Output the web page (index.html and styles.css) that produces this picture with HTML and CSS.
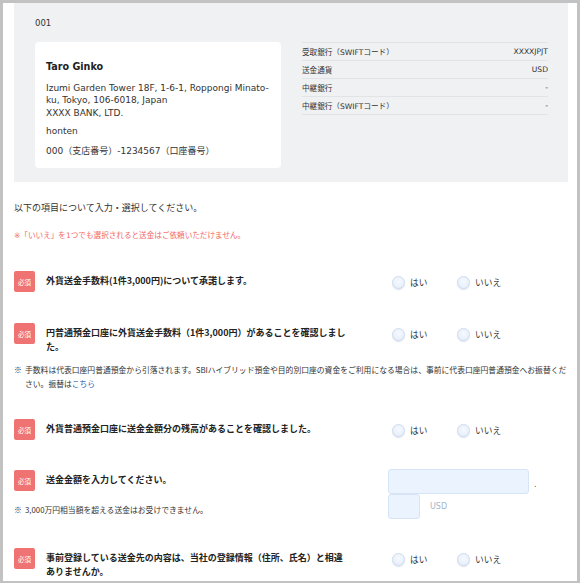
FILE: index.html
```html
<!DOCTYPE html>
<html lang="ja">
<head>
<meta charset="utf-8">
<title>送金内容確認</title>
<link rel="stylesheet" href="styles.css">
</head>
<body>
<div class="frame">
  <section class="panel">
    <div class="num">001</div>
    <div class="panel-body">
      <div class="card">
        <div class="card-name">Taro Ginko</div>
        <div class="card-addr">Izumi Garden Tower 18F, 1-6-1, Roppongi Minato-ku, Tokyo, 106-6018, Japan<br>XXXX BANK, LTD.</div>
        <div class="card-branch">honten</div>
        <div class="card-acct">000（支店番号）-1234567（口座番号）</div>
      </div>
      <div class="info">
        <div class="info-row"><span>受取銀行（SWIFTコード）</span><span>XXXXJPJT</span></div>
        <div class="info-row"><span>送金通貨</span><span>USD</span></div>
        <div class="info-row"><span>中継銀行</span><span>-</span></div>
        <div class="info-row"><span>中継銀行（SWIFTコード）</span><span>-</span></div>
      </div>
    </div>
  </section>

  <p class="intro">以下の項目について入力・選択してください。</p>
  <p class="warn">※「いいえ」を1つでも選択されると送金はご依頼いただけません。</p>

  <div class="item">
    <div class="head"><span class="badge">必須</span><span class="label">外貨送金手数料(1件3,000円)について承諾します。</span></div>
    <div class="radios">
      <label class="opt"><span class="dot"></span>はい</label>
      <label class="opt"><span class="dot"></span>いいえ</label>
    </div>
  </div>

  <div class="item item-second">
    <div class="head"><span class="badge">必須</span><span class="label">円普通預金口座に外貨送金手数料（1件3,000円）があることを確認しました。</span></div>
    <div class="radios">
      <label class="opt"><span class="dot"></span>はい</label>
      <label class="opt"><span class="dot"></span>いいえ</label>
    </div>
    <p class="note"><span class="mark">※</span><span class="note-text">手数料は代表口座円普通預金から引落されます。SBIハイブリッド預金や目的別口座の資金をご利用になる場合は、事前に代表口座円普通預金へお振替ください。振替は<a href="#" class="link">こちら</a></span></p>
  </div>

  <div class="item item-after-note">
    <div class="head"><span class="badge">必須</span><span class="label">外貨普通預金口座に送金金額分の残高があることを確認しました。</span></div>
    <div class="radios">
      <label class="opt"><span class="dot"></span>はい</label>
      <label class="opt"><span class="dot"></span>いいえ</label>
    </div>
  </div>

  <div class="item item-amount">
    <div class="head"><span class="badge">必須</span><span class="label">送金金額を入力してください。</span></div>
    <div class="amount">
      <div class="amount-row"><span class="box box-int"></span><span class="dec">.</span></div>
      <div class="amount-row"><span class="box box-dec"></span><span class="cur">USD</span></div>
    </div>
    <p class="note note-short"><span class="mark">※</span><span class="note-text">3,000万円相当額を超える送金はお受けできません。</span></p>
  </div>

  <div class="item">
    <div class="head"><span class="badge">必須</span><span class="label">事前登録している送金先の内容は、当社の登録情報（住所、氏名）と相違ありませんか。</span></div>
    <div class="radios">
      <label class="opt"><span class="dot"></span>はい</label>
      <label class="opt"><span class="dot"></span>いいえ</label>
    </div>
  </div>
</div>
</body>
</html>
```

FILE: styles.css
```css
* { box-sizing: border-box; }
html, body { margin: 0; padding: 0; background: #fff; }
body {
  font-family: "DejaVu Sans", "Noto Sans CJK JP", sans-serif;
  color: #333;
}
p { margin: 0; }

.frame {
  width: 580px;
  height: 583px;
  border: 3px solid #c2c2c2;
  border-bottom-width: 2px;
  padding: 0 9px 0 11px;
  overflow: hidden;
  background: #fff;
}

/* top panel */
.panel {
  background: #f0f1f3;
  padding: 14px 20px 14px 21px;
}
.num {
  font-size: 8.5px;
  line-height: 12px;
  color: #333;
}
.panel-body {
  margin-top: 13px;
  display: grid;
  grid-template-columns: 246px 246px;
  column-gap: 21px;
  align-items: start;
}
.card {
  background: #fff;
  border-radius: 4px;
  padding: 19px 11px 11px 11px;
  font-size: 9px;
  line-height: 12.3px;
  color: #333;
}
.card-name {
  font-size: 9.6px;
  line-height: 12px;
  font-weight: bold;
  color: #222;
}
.card-addr { margin-top: 9px; }
.card-branch { margin-top: 6px; }
.card-acct { margin-top: 8px; }

.info {
  border-top: 1px solid #e1e3e6;
}
.info-row {
  display: flex;
  justify-content: space-between;
  align-items: center;
  height: 18px;
  border-bottom: 1px solid #e1e3e6;
  font-size: 7.6px;
  color: #333;
}

/* texts */
.intro {
  margin-top: 19px;
  font-size: 9px;
  line-height: 14px;
  color: #333;
}
.warn {
  margin-top: 15px;
  font-size: 7.6px;
  line-height: 12px;
  color: #f26868;
}

/* items */
.item {
  margin-top: 29px;
  display: grid;
  grid-template-columns: 374px 1fr;
  align-items: start;
}
.item-second { margin-top: 30px; }
.item-after-note { margin-top: 28px; }
.head {
  display: flex;
  align-items: flex-start;
  gap: 11px;
}
.badge {
  flex: none;
  width: 21px;
  height: 21px;
  background: #f07373;
  border-radius: 2px;
  color: #fff;
  font-size: 6.5px;
  display: flex;
  align-items: center;
  justify-content: center;
  font-family: "Noto Sans CJK JP", sans-serif;
}
.label {
  width: 300px;
  padding-top: 3px;
  font-size: 9px;
  line-height: 14px;
  font-weight: bold;
  color: #222;
  font-family: "Noto Sans CJK JP", sans-serif;
}
.radios {
  display: flex;
  align-items: center;
  height: 21px;
  margin-top: 1px;
  padding-left: 4px;
}
.opt {
  display: flex;
  align-items: center;
  gap: 5px;
  width: 65px;
  font-size: 8.7px;
  color: #333;
  font-family: "Noto Sans CJK JP", sans-serif;
}
.dot {
  width: 13px;
  height: 13px;
  border-radius: 50%;
  border: 1px solid #cddcee;
  background: radial-gradient(circle at 50% 40%, #f6f9fe 0%, #e3ecf8 100%);
  box-shadow: 0 1px 1px rgba(150, 170, 200, 0.35);
}
.note {
  grid-column: 1 / -1;
  margin-top: 9px;
  display: flex;
  font-size: 7.8px;
  line-height: 14px;
  color: #333;
  font-family: "Noto Sans CJK JP", sans-serif;
}
.mark {
  flex: none;
  width: 11px;
}
.note-text { flex: 1; min-width: 0; }
.link { color: #2a63b8; text-decoration: none; }

/* amount */
.item-amount .amount {
  grid-row: 1 / span 2;
  grid-column: 2;
  margin-top: -1px;
  display: flex;
  flex-direction: column;
}
.amount-row {
  display: flex;
  align-items: center;
}
.box {
  display: block;
  background: #ebf3fe;
  border: 1px solid #d6e4f6;
  border-radius: 3px;
}
.box-int { width: 141px; height: 25px; }
.box-dec { width: 32px; height: 25px; }
.dec {
  margin-left: 5px;
  padding-top: 6px;
  font-size: 8px;
  color: #555;
}
.cur {
  margin-left: 10px;
  font-size: 8px;
  color: #a5b6cb;
}
.note-short {
  grid-column: 1;
  grid-row: 2;
  margin-top: 9px;
}
```
